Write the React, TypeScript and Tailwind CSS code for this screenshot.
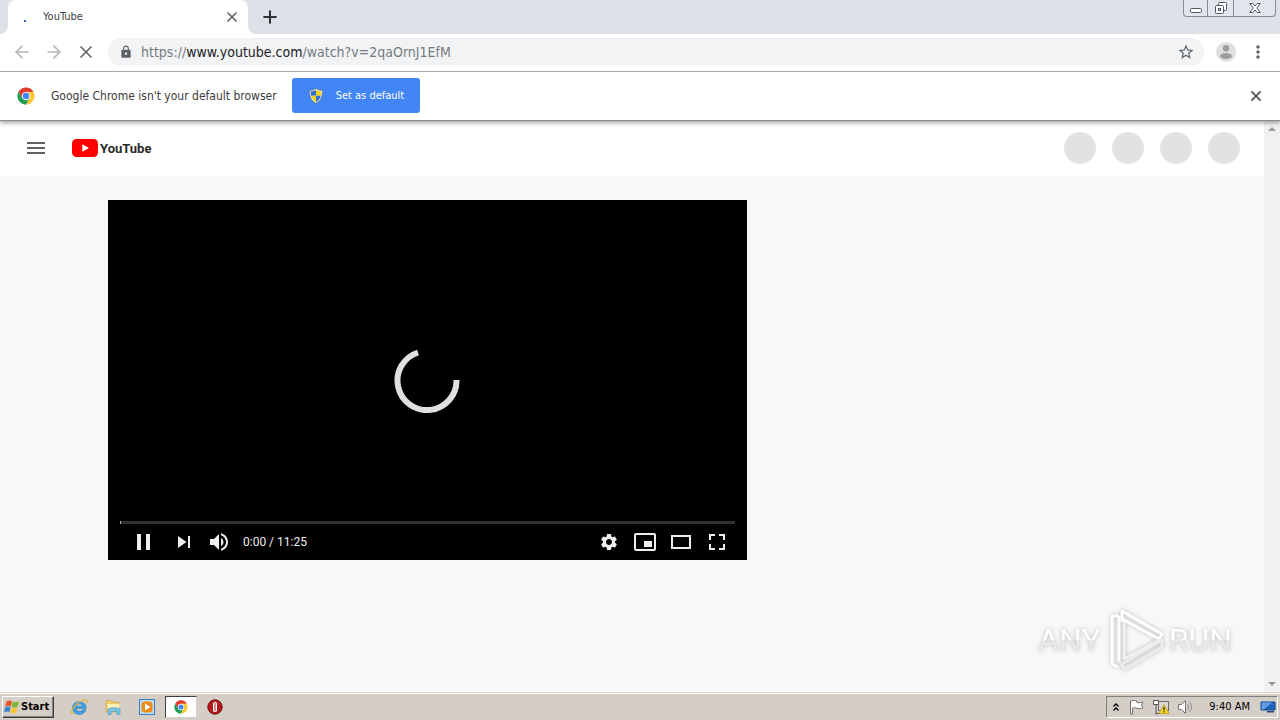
import { ArrowLeft, ArrowRight, Plus, X } from "lucide-react";
import { MdLock, MdMenu, MdMoreVert, MdSettings, MdStarBorder, MdVolumeUp } from "react-icons/md";

const uiFont = "font-['DejaVu_Sans_Condensed','DejaVu_Sans',sans-serif]";

function ChromeLogo({ className }: { className?: string }) {
  return (
    <svg viewBox="0 0 48 48" className={className} aria-hidden="true">
      <path d="M24 1 L43.9 12.5 H24 L14 29.5 4.1 12.5A23 23 0 0 1 24 1Z" fill="#e33b2e" />
      <path d="M24 1A23 23 0 0 1 43.900 12.500H24Z" fill="#e33b2e" />
      <path d="M4.1 12.5 14.5 29.7 24 35 34 29.5 24 47A23 23 0 0 1 4.1 12.5Z" fill="#1f9d55" />
      <path d="M24 13H43.9A23 23 0 0 1 24 47L34 29.5Z" fill="#fcc934" />
      <circle cx="24" cy="24" r="11" fill="#fff" />
      <circle cx="24" cy="24" r="8.6" fill="#4285f4" />
    </svg>
  );
}

function ShieldIcon() {
  return (
    <svg viewBox="0 0 16 16" className="size-4" aria-hidden="true">
      <path d="M8 .6C6 2 4 2.300 1.600 2.300c-.2 6 1.300 10.200 6.400 13 5.100-2.800 6.600-7 6.400-13C12 2.300 10 2 8 .6Z" fill="#efe9cc" stroke="#59718d" strokeWidth=".6" />
      <path d="M8 2C6.500 3 5 3.400 2.800 3.500c0 1.500.1 2.800.4 4.200H8Z" fill="#2b6fd0" />
      <path d="M8 2c1.500 1 3 1.400 5.200 1.500 0 1.500-.1 2.800-.4 4.200H8Z" fill="#f7cf22" />
      <path d="M3.200 7.700H8V14C5.300 12.400 3.900 10.500 3.200 7.700Z" fill="#f7cf22" />
      <path d="M12.800 7.700H8V14c2.700-1.600 4.100-3.500 4.800-6.300Z" fill="#2b6fd0" />
    </svg>
  );
}

function TabStrip() {
  return (
    <header className="flex h-[34px] items-stretch bg-[#dee1e8] pl-2">
      <div className="relative flex w-60 items-center rounded-t-lg bg-white pr-2 pl-4">
        <svg viewBox="0 0 8 8" className="absolute bottom-0 -left-2 size-2" aria-hidden="true">
          <path d="M8 0v8H0a8 8 0 0 0 8-8Z" fill="#fff" />
        </svg>
        <svg viewBox="0 0 8 8" className="absolute -right-2 bottom-0 size-2" aria-hidden="true">
          <path d="M0 0v8h8a8 8 0 0 1-8-8Z" fill="#fff" />
        </svg>
        <span className="mt-2 size-[2px] bg-[#3b63c4]" />
        <h1 className="ml-[17px] flex-1 pt-px text-[11px] text-[#3c4043]">YouTube</h1>
        <button type="button" aria-label="Close tab" className="text-[#5f6368]">
          <X className="size-4" strokeWidth={2.5} />
        </button>
      </div>
      <button type="button" aria-label="New tab" className="ml-3 text-[#303338]">
        <Plus className="size-5" strokeWidth={2.5} />
      </button>
      <div className="mr-1 ml-auto flex h-[17px] rounded-b border border-t-0 border-[#858b98] bg-[#e2e5eb] text-[#4e5564]">
        <button type="button" aria-label="Minimize" className="flex w-6 items-center justify-center border-r border-[#858b98]">
          <svg viewBox="0 0 12 12" className="size-3" fill="#fff" stroke="currentColor" aria-hidden="true">
            <rect x=".5" y="6.500" width="11" height="4" rx="1" />
          </svg>
        </button>
        <button type="button" aria-label="Restore" className="flex w-[26px] items-center justify-center border-r border-[#858b98]">
          <svg viewBox="0 0 14 14" className="size-[14px]" fill="#fff" stroke="currentColor" aria-hidden="true">
            <rect x="4.500" y="1.500" width="8" height="8" rx="1" />
            <rect x="1.500" y="4.500" width="8" height="8" rx="1" />
            <rect x="4.500" y="7.500" width="2" height="2" />
          </svg>
        </button>
        <button type="button" aria-label="Close window" className="flex w-[41px] items-center justify-center">
          <svg viewBox="0 0 12 12" className="size-3" fill="#fff" stroke="currentColor" strokeLinejoin="round" aria-hidden="true">
            <path d="M.8 1.500h3L6 4l2.200-2.500h3L7.800 6l3.400 4.500h-3L6 8l-2.200 2.500h-3L4.200 6Z" />
          </svg>
        </button>
      </div>
    </header>
  );
}

function Toolbar() {
  return (
    <nav className="flex h-[38px] items-center border-b border-[#b0b0b0] bg-white px-3 pb-px">
      <div className="flex gap-3">
        <button type="button" aria-label="Back" className="text-[#b4b6b9]">
          <ArrowLeft className="size-5" />
        </button>
        <button type="button" aria-label="Forward" className="text-[#b4b6b9]">
          <ArrowRight className="size-5" />
        </button>
        <button type="button" aria-label="Stop loading" className="text-[#5f6368]">
          <X className="size-5" />
        </button>
      </div>
      <div className="ml-3 flex h-7 flex-1 items-center rounded-full bg-[#f1f3f4] pr-[9px] pl-[11px]">
        <MdLock className="size-[14px] text-[#5f6368]" />
        <div role="textbox" aria-label="Address" tabIndex={0} className="ml-2 flex-1 text-sm text-[#777b80]">
          https://<span className="text-[#202124]">www.youtube.com</span>/watch?v=2qaOrnJ1EfM
        </div>
        <button type="button" aria-label="Bookmark this page" className="text-[#5f6368]">
          <MdStarBorder className="size-[18px]" />
        </button>
      </div>
      <button type="button" aria-label="Profile" className="ml-3">
        <svg viewBox="0 0 20 20" className="size-5" aria-hidden="true">
          <circle cx="10" cy="10" r="10" fill="#dfdfdf" />
          <circle cx="10" cy="6.200" r="3.200" fill="#9c9c9c" />
          <ellipse cx="10" cy="14" rx="6" ry="3" fill="#9c9c9c" />
        </svg>
      </button>
      <button type="button" aria-label="Menu" className="ml-3 text-[#5f6368]">
        <MdMoreVert className="size-5" />
      </button>
    </nav>
  );
}

function DefaultBrowserBar() {
  return (
    <section className="relative z-10 flex h-[49px] items-center border-b border-[#8d8d8d] bg-white pr-4 pb-px pl-[17px] shadow-[0_2px_4px_rgba(0,0,0,0.35)]">
      <ChromeLogo className="size-[18px]" />
      <p className="ml-4 text-xs text-[#3c3c3c]">Google Chrome isn't your default browser</p>
      <button type="button" className="ml-[15px] flex h-[35px] items-center gap-3 rounded-[3px] bg-[#4285f4] px-4 text-[11px] text-white">
        <ShieldIcon />
        <span className="pt-px">Set as default</span>
      </button>
      <button type="button" aria-label="Dismiss" className="ml-auto text-[#5f6368]">
        <X className="size-4" strokeWidth={3} />
      </button>
    </section>
  );
}

function Masthead() {
  return (
    <div className="flex h-[55px] items-center bg-white px-6 pb-px">
      <button type="button" aria-label="Guide" className="text-[#606060]">
        <MdMenu className="size-6" />
      </button>
      <a href="#home" className="ml-6 flex items-center gap-[2px]">
        <svg viewBox="0 0 26 18" className="h-[18px] w-[26px]" aria-hidden="true">
          <rect width="26" height="18" rx="4.500" fill="#f00" />
          <path d="M10.300 5.200v7.600L17 9Z" fill="#fff" />
        </svg>
        <span className="font-[Roboto,sans-serif] text-[13px] leading-none font-bold text-[#282828]">YouTube</span>
      </a>
      <div className="ml-auto flex gap-4">
        {[0, 1, 2, 3].map((slot) => (
          <span key={slot} className="size-8 rounded-full bg-[#e2e2e2]" />
        ))}
      </div>
    </div>
  );
}

function Player() {
  return (
    <div className="relative flex aspect-[639/360] flex-col justify-end bg-black px-3 text-[#eee]">
      <div className="absolute inset-0 flex items-center justify-center pr-px">
        <svg viewBox="0 0 66 66" className="size-[66px]" aria-label="Loading">
          <path d="M24 5.500A29.500 29.500 0 1 0 62.500 33" fill="none" stroke="#e0e0e0" strokeWidth="6" />
        </svg>
      </div>
      <div className="flex h-[3px] bg-[#333]">
        <span className="w-px bg-[#aaa]" />
      </div>
      <div className="relative flex h-9 items-center">
        <button type="button" aria-label="Pause" className="ml-2">
          <svg viewBox="0 0 32 32" className="size-8" fill="currentColor" aria-hidden="true">
            <path d="M9 8h4v16H9zM18 8h4v16h-4z" />
          </svg>
        </button>
        <button type="button" aria-label="Next" className="ml-3">
          <svg viewBox="0 0 24 24" className="size-6" fill="currentColor" aria-hidden="true">
            <path d="M6 6v12l8.500-6zM16 6h2v12h-2z" />
          </svg>
        </button>
        <button type="button" aria-label="Mute" className="ml-[11px]">
          <MdVolumeUp className="size-6" />
        </button>
        <span className="ml-3 font-[Roboto,'Liberation_Sans',sans-serif] text-xs">0:00 / 11:25</span>
        <div className="mr-[6px] ml-auto flex gap-3">
          <button type="button" aria-label="Settings">
            <MdSettings className="size-6 p-[2px]" />
          </button>
          <button type="button" aria-label="Miniplayer">
            <svg viewBox="0 0 24 24" className="size-6" aria-hidden="true">
              <rect x="2" y="4" width="20" height="16" rx="1" fill="none" stroke="currentColor" strokeWidth="2" />
              <rect x="11" y="11" width="8" height="6" fill="currentColor" />
            </svg>
          </button>
          <button type="button" aria-label="Theater mode">
            <svg viewBox="0 0 24 24" className="size-6" aria-hidden="true">
              <rect x="3" y="6" width="18" height="12" fill="none" stroke="currentColor" strokeWidth="2" />
            </svg>
          </button>
          <button type="button" aria-label="Full screen">
            <svg viewBox="0 0 24 24" className="size-6" fill="none" stroke="currentColor" strokeWidth="2" aria-hidden="true">
              <path d="M5 10V5h5M14 5h5v5M19 14v5h-5M10 19H5v-5" />
            </svg>
          </button>
        </div>
      </div>
    </div>
  );
}

function Watermark() {
  return (
    <div className="absolute right-8 bottom-5 flex items-center gap-1 font-[Roboto,'Liberation_Sans',sans-serif] text-[32px] leading-none text-transparent drop-shadow-[0_0_2px_rgba(0,0,0,0.25)]">
      <span className="bg-linear-to-b from-white from-50% to-[#e9e9e9] to-50% bg-clip-text">ANY</span>
      <svg viewBox="0 0 60 64" className="h-16 w-[60px]" fill="none" stroke="#fff" strokeWidth="3" strokeLinejoin="round" aria-hidden="true">
        <path d="M14 8H7v48l6 3M14 8v46" />
        <path d="M17 14V3l40 23-3 5-37-20" />
        <path d="M19 13v38l37-20" stroke="#f0f0f0" />
        <path d="M14 53l6 8 37-22v-7L17 56" stroke="#ececec" />
      </svg>
      <span className="bg-linear-to-b from-white from-50% to-[#e9e9e9] to-50% bg-clip-text">RUN</span>
    </div>
  );
}

function Scrollbar() {
  return (
    <div className="flex w-4 flex-col items-center justify-between bg-[#f1f1f1] py-[6px]" aria-hidden="true">
      <svg viewBox="0 0 8 4" className="h-1 w-2" fill="#999">
        <path d="M0 4 4 0l4 4Z" />
      </svg>
      <svg viewBox="0 0 8 4" className="h-1 w-2" fill="#999">
        <path d="M0 0h8L4 4Z" />
      </svg>
    </div>
  );
}

function WindowsFlag() {
  return (
    <svg viewBox="0 0 16 16" className="size-4" aria-hidden="true">
      <path d="M2.500 2.500C4.500 1 6 1.200 8 2.200L6.800 7.400C5 6.400 3.200 6.400 1.200 7.600Z" fill="#e8562a" />
      <path d="M8.800 2.500c2 1 4 1 6.200-.2l-1.300 5.200c-2 1.200-4 1.200-6.100.2Z" fill="#7eb735" />
      <path d="M1 8.400c2-1.200 3.800-1.200 5.600-.2l-1.200 5C3.600 12.200 2 12.200 0 13.400Z" fill="#3a81d8" />
      <path d="M7.400 8.500c2 1 4 1 6.100-.1l-1.300 5c-2 1.200-4 1.200-6 .2Z" fill="#f8c62c" />
    </svg>
  );
}

function ExplorerIcon() {
  return (
    <svg viewBox="0 0 18 18" className="size-[18px]" aria-hidden="true">
      <path d="M16.200 10.500H6c.3 3.200 5.200 3.800 6.400 1.300h3.500C14 18.500 2.500 18 2.500 9.800 2.500 1.500 16.500 1.500 16.200 10.500ZM6.100 8.200h6.300c-.4-3-5.900-3-6.300 0Z" fill="#3d9fe6" stroke="#2273b5" strokeWidth=".5" />
      <path d="M3.300 14.500C-1 18.500 1.500 10 8 5s10.500-3.500 8.500 0" fill="none" stroke="#e3b23c" strokeWidth="1.300" />
    </svg>
  );
}

function FolderIcon() {
  return (
    <svg viewBox="0 0 18 18" className="size-[18px]" aria-hidden="true">
      <path d="M2 2.500h5l1 1.500h7V14H2Z" fill="#f0cd68" stroke="#c79b38" strokeWidth=".6" />
      <path d="M3.500 6h12v5h-12Z" fill="#fbeeb2" />
      <path d="M4 16.500v-5c0-2.200 12-2.200 12 0v5h-3v-3.200H7v3.200Z" fill="#7cc6ec" stroke="#4190c2" strokeWidth=".6" />
    </svg>
  );
}

function MediaIcon() {
  return (
    <svg viewBox="0 0 18 18" className="size-[18px]" aria-hidden="true">
      <rect x="1.500" y="1.500" width="15" height="15" fill="#b9dcf3" stroke="#3982bd" />
      <rect x="3.500" y="3.500" width="11" height="11" rx="3.500" fill="#f08a18" />
      <path d="M7 5.500v7L12.500 9Z" fill="#fff" />
    </svg>
  );
}

function OperaIcon() {
  return (
    <svg viewBox="0 0 18 18" className="size-[18px]" aria-hidden="true">
      <circle cx="9" cy="9" r="7.200" fill="#b5191c" stroke="#6f1012" />
      <rect x="7" y="4" width="4" height="10" rx="1.800" fill="#fff" />
      <rect x="8.500" y="5" width="1" height="8" fill="#96292b" />
    </svg>
  );
}

function Tray() {
  return (
    <div className="ml-auto flex h-[22px] items-center border border-t-[#808080] border-r-white border-b-white border-l-[#808080] pr-px pl-[6px]">
      <svg viewBox="0 0 6 10" className="h-[10px] w-[6px]" fill="none" stroke="#000" strokeWidth="1.300" aria-label="Show hidden icons">
        <path d="M.5 4.500 3 2l2.500 2.500M.5 8.500 3 6l2.500 2.500" />
      </svg>
      <svg viewBox="0 0 18 18" className="ml-[9px] size-[18px]" aria-label="Action Center">
        <path d="M3.500 3c2-1 3.500-.5 5 0v1c2 1 4 1 6.500 0l-1.500 3 1.500 3c-2.500 1-4.500 1-6.500 0-1.500-.5-2.500-.5-4 0v6h-2V3Z" fill="#fff" stroke="#6d6d6d" />
      </svg>
      <svg viewBox="0 0 18 18" className="ml-[6px] size-[18px]" aria-label="Network">
        <rect x="6.500" y="3.500" width="10" height="9" fill="#d6d6d6" stroke="#6b6b6b" />
        <path d="M1.500 2.500h5v4h-5ZM4 6.500v10M4 15.500h4" fill="#fff" stroke="#555" />
        <path d="M12 6.500 17 15.500H7Z" fill="#fbd723" stroke="#b38f0a" strokeWidth=".7" />
        <path d="M12 9v3.500M12 13.200v1.200" stroke="#222" strokeWidth="1.200" />
      </svg>
      <svg viewBox="0 0 18 18" className="ml-[6px] size-[18px]" aria-label="Volume">
        <path d="M2.500 6.500h3l4-4v13l-4-4h-3Z" fill="#fff" stroke="#747474" />
        <path d="M11.500 6c1.300 2 1.300 4 0 6M13.500 4c2.600 3 2.600 7 0 10" fill="none" stroke="#8b8b8b" />
      </svg>
      <time className="ml-[15px] pt-px text-[11px] text-black">9:40 AM</time>
      <svg viewBox="0 0 16 16" className="ml-[10px] size-4" aria-label="Show desktop">
        <path d="M1 3h14v8H1Z" fill="#2264bd" stroke="#17448c" />
        <path d="M1.500 3.500H12L4 10.500H1.500Z" fill="#5e9de4" />
        <path d="M7 12h7v1.500H7Z" fill="#23467c" />
      </svg>
    </div>
  );
}

function Taskbar() {
  return (
    <footer className="flex h-[28px] items-center border-t border-[#d4d0c8] bg-[#d4cec6] px-[2px] shadow-[inset_0_1px_0_#fff]">
      <button
        type="button"
        className="flex h-[22px] items-center gap-px border border-t-white border-r-[#404040] border-b-[#404040] border-l-white pr-1 pl-px text-[11px] font-bold text-black shadow-[inset_-1px_-1px_0_#808080]"
      >
        <WindowsFlag />
        <span className="pt-px">Start</span>
      </button>
      <div className="ml-4 flex items-center gap-4">
        <button type="button" aria-label="Internet Explorer">
          <ExplorerIcon />
        </button>
        <button type="button" aria-label="Windows Explorer">
          <FolderIcon />
        </button>
        <button type="button" aria-label="Media Player">
          <MediaIcon />
        </button>
      </div>
      <button
        type="button"
        aria-label="Google Chrome"
        className="ml-[9px] flex h-[22px] w-8 items-center justify-center border border-t-[#404040] border-r-[#d4d0c8] border-b-[#d4d0c8] border-l-[#404040] bg-white"
      >
        <ChromeLogo className="size-[14px]" />
      </button>
      <button type="button" aria-label="Opera" className="ml-[9px]">
        <OperaIcon />
      </button>
      <Tray />
    </footer>
  );
}

export default function App() {
  return (
    <div className={`flex min-h-screen flex-col ${uiFont}`}>
      <TabStrip />
      <Toolbar />
      <DefaultBrowserBar />
      <div className="flex flex-1">
        <main className="relative flex-1 bg-[#f8f8f8]">
          <Masthead />
          <div className="flex px-[108px] pt-6">
            <div className="min-w-0 flex-1">
              <Player />
            </div>
            <aside className="w-[409px]" />
          </div>
          <Watermark />
        </main>
        <Scrollbar />
      </div>
      <Taskbar />
    </div>
  );
}
